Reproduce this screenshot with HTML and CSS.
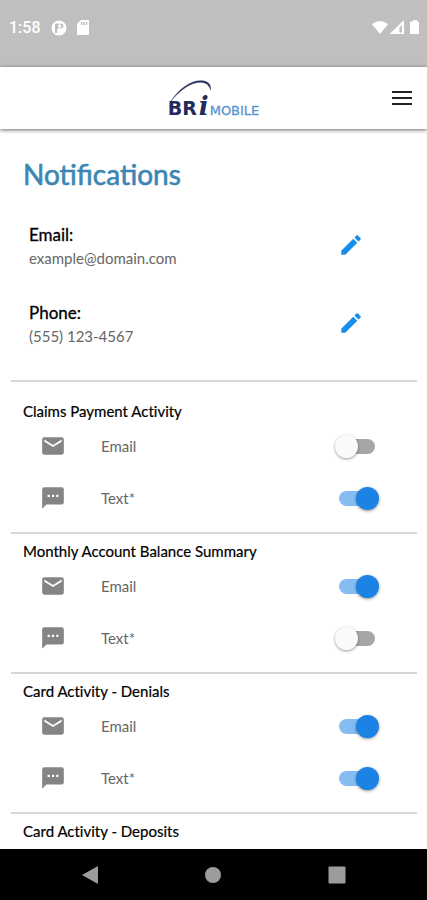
FILE: index.html
```html
<!DOCTYPE html>
<html lang="en">
<head>
<meta charset="utf-8">
<meta name="viewport" content="width=device-width, initial-scale=1">
<title>Notifications</title>
<link rel="stylesheet" href="styles.css">
</head>
<body>
<svg class="sprite" aria-hidden="true">
  <symbol id="pencil" viewBox="0 0 24 24"><path d="M3 17.25V21h3.75L17.81 9.94l-3.75-3.75L3 17.25zM20.71 7.04a1 1 0 0 0 0-1.41l-2.34-2.34a1 1 0 0 0-1.41 0l-1.83 1.83 3.75 3.75 1.83-1.83z"/></symbol>
  <symbol id="mail" viewBox="0 0 24 24"><path d="M20 4H4a2 2 0 0 0-2 2v12a2 2 0 0 0 2 2h16a2 2 0 0 0 2-2V6a2 2 0 0 0-2-2zm0 4-8 5-8-5V6l8 5 8-5v2z"/></symbol>
  <symbol id="sms" viewBox="0 0 24 24"><path d="M20 2H4a2 2 0 0 0-2 2v18l4-4h14a2 2 0 0 0 2-2V4a2 2 0 0 0-2-2zM9 11H7V9h2v2zm4 0h-2V9h2v2zm4 0h-2V9h2v2z"/></symbol>
</svg>

<div class="status">
  <span class="clock">1:58</span>
  <svg class="status-app" viewBox="0 0 16 16"><circle cx="8" cy="8" r="7.5" fill="#fff"/><path d="M4 3.500h3.500V9H6.200v4H4zM9 3.500c2.500 0 3.500 1.200 3.500 2.500S11.500 8.500 9 8.500V7c1 0 1.500-.4 1.500-1S10 5 9 5z" fill="#bfbfbf"/></svg>
  <svg class="status-card" viewBox="0 0 12 15"><path d="M4 0h7a1 1 0 0 1 1 1v13a1 1 0 0 1-1 1H1a1 1 0 0 1-1-1V4z" fill="#fff"/><path d="M4 2h1.500v3H4zM6.500 2H8v3H6.500zM9 2h1.300v3H9z" fill="#bfbfbf"/></svg>
  <svg class="status-signal" viewBox="0 0 48 16"><g fill="#fff"><path d="M0 4.200Q8-2.200 16 4.200L8 14z"/><path d="M32 0v14H17.500z"/><path d="M41 0h4v1.500h2V14h-9V1.500h3z"/></g><path d="M30 5v7.500h-2.500V7.500z" fill="#bfbfbf"/></svg>
</div>

<header class="topbar">
  <a class="logo" href="#" aria-label="BRi Mobile">
    <svg class="logo-arc" viewBox="0 0 46 24" aria-hidden="true"><path d="M2 22C12 7 25 0 35 2c5 1 7 4 6.500 9C40.500 7 38.500 4.500 34 3.500 25 2 13 8.500 2 22z" fill="#25295c" stroke="#25295c" stroke-width=".4"/></svg>
    <span class="logo-br">BR</span><span class="logo-i">i</span><span class="logo-mobile">MOBILE</span>
  </a>
  <button class="menu" type="button" aria-label="Menu"><svg viewBox="0 0 20 14"><path d="M0 1h20M0 7h20M0 13h20" stroke="#222" stroke-width="2"/></svg></button>
</header>

<main>
  <h1>Notifications</h1>
  <section class="contacts">
    <div class="contact">
      <div><h2>Email:</h2><p>example@domain.com</p></div>
      <button class="edit" type="button" aria-label="Edit email"><svg><use href="#pencil"/></svg></button>
    </div>
    <div class="contact">
      <div><h2>Phone:</h2><p>(555) 123-4567</p></div>
      <button class="edit" type="button" aria-label="Edit phone"><svg><use href="#pencil"/></svg></button>
    </div>
  </section>

  <section class="group group-first">
    <h3>Claims Payment Activity</h3>
    <label class="row"><svg><use href="#mail"/></svg><span>Email</span><input type="checkbox" role="switch"></label>
    <label class="row"><svg><use href="#sms"/></svg><span>Text*</span><input type="checkbox" role="switch" checked></label>
  </section>
  <section class="group">
    <h3>Monthly Account Balance Summary</h3>
    <label class="row"><svg><use href="#mail"/></svg><span>Email</span><input type="checkbox" role="switch" checked></label>
    <label class="row"><svg><use href="#sms"/></svg><span>Text*</span><input type="checkbox" role="switch"></label>
  </section>
  <section class="group">
    <h3>Card Activity - Denials</h3>
    <label class="row"><svg><use href="#mail"/></svg><span>Email</span><input type="checkbox" role="switch" checked></label>
    <label class="row"><svg><use href="#sms"/></svg><span>Text*</span><input type="checkbox" role="switch" checked></label>
  </section>
  <section class="group">
    <h3>Card Activity - Deposits</h3>
  </section>
</main>

<nav class="system">
  <button type="button" aria-label="Back"><svg viewBox="0 0 18 18"><path d="M17 0v18L1 9z"/></svg></button>
  <button type="button" aria-label="Home"><svg viewBox="0 0 18 18"><circle cx="9" cy="9" r="8"/></svg></button>
  <button type="button" aria-label="Overview"><svg viewBox="0 0 18 18"><rect x=".5" y=".5" width="17" height="17" rx="1"/></svg></button>
</nav>
</body>
</html>
```
FILE: styles.css
```css
* { box-sizing: border-box; }

body {
  margin: 0;
  height: 100vh;
  display: flex;
  flex-direction: column;
  background: #fff;
  color: #111;
  font-family: Lato, "Liberation Sans", sans-serif;
}

h1, h2, h3, p { margin: 0; font-weight: 400; }

button {
  display: flex;
  align-items: center;
  justify-content: center;
  padding: 0;
  border: 0;
  background: none;
}

.sprite { display: none; }

.status {
  flex: none;
  display: flex;
  align-items: center;
  height: 67px;
  padding: 0 7px 12px 9px;
  background: #bfbfbf;
}
.clock {
  margin-right: 10px;
  color: #fff;
  font: 500 16px/20px Roboto, sans-serif;
}
.status-app { width: 16px; height: 16px; margin-right: 10px; }
.status-card { width: 12px; height: 15px; }
.status-signal { width: 48px; height: 16px; margin-left: auto; }

.topbar {
  flex: none;
  position: relative;
  z-index: 1;
  display: flex;
  align-items: center;
  justify-content: center;
  height: 62px;
  background: #fff;
  box-shadow: 0 1px 4px rgba(0, 0, 0, .6);
}
.logo {
  position: relative;
  display: flex;
  align-items: baseline;
  padding-top: 20px;
  line-height: 24px;
  text-decoration: none;
  color: #25295c;
}
.logo-arc { position: absolute; left: 1px; top: 5px; width: 46px; height: 24px; }
.logo-br { font: 700 19px/24px "DejaVu Sans", sans-serif; }
.logo-i { margin: 0 1px 0 2px; font: italic 700 26px/24px "DejaVu Serif", serif; }
.logo-mobile { color: #5795cf; font: 400 13px/24px "DejaVu Sans", sans-serif; -webkit-text-stroke: 0.3px; }
.menu { position: absolute; right: 8px; top: 14px; width: 34px; height: 34px; }
.menu svg { width: 20px; height: 14px; }

main {
  flex: 1;
  min-height: 0;
  overflow: auto;
  scrollbar-width: none;
  padding: 27px 10px 0 11px;
}

h1 {
  padding-left: 12px;
  color: #3c86b5;
  font-size: 28px;
  line-height: 36px;
  -webkit-text-stroke: 0.6px;
}

.contacts { padding: 31px 48px 33px 18px; }
.contact {
  display: flex;
  align-items: flex-start;
  justify-content: space-between;
  height: 46px;
}
.contact + .contact { margin-top: 32px; }
.contact h2 { font-size: 17px; line-height: 24px; color: #000; -webkit-text-stroke: 0.3px; }
.contact p { font-size: 15px; line-height: 22px; color: #666; }
.edit { width: 36px; height: 44px; }
.edit svg { width: 26px; height: 26px; fill: #168eea; }

.group {
  padding: 8px 38px 8px 12px;
  border-top: 2px solid #d6d6d6;
}
.group-first { padding-top: 20px; }
.group h3 {
  font-size: 15px;
  line-height: 18px;
  color: #000;
  font-variant-ligatures: none;
  -webkit-text-stroke: 0.2px;
}

.row {
  display: flex;
  align-items: center;
  height: 52px;
  padding-left: 17px;
  color: #666;
  font-size: 15px;
}
.row svg { width: 26px; height: 26px; margin-right: 35px; fill: #858585; }
.row input {
  appearance: none;
  position: relative;
  width: 36px;
  height: 15px;
  margin: 0 4px 0 auto;
  border-radius: 8px;
  background: #a6a6a6;
}
.row input::before {
  content: "";
  position: absolute;
  left: -4px;
  top: -4px;
  width: 23px;
  height: 23px;
  border-radius: 50%;
  background: #fafafa;
  box-shadow: 0 1px 3px rgba(0, 0, 0, .4);
}
.row input:checked { background: #85bdf3; }
.row input:checked::before { left: 17px; background: #1c82e3; }

.system {
  flex: none;
  display: flex;
  align-items: center;
  justify-content: space-around;
  height: 51px;
  padding: 0 28px;
  background: #000;
}
.system button { width: 48px; height: 48px; }
.system svg { width: 18px; height: 18px; fill: #9c9c9c; }
```
